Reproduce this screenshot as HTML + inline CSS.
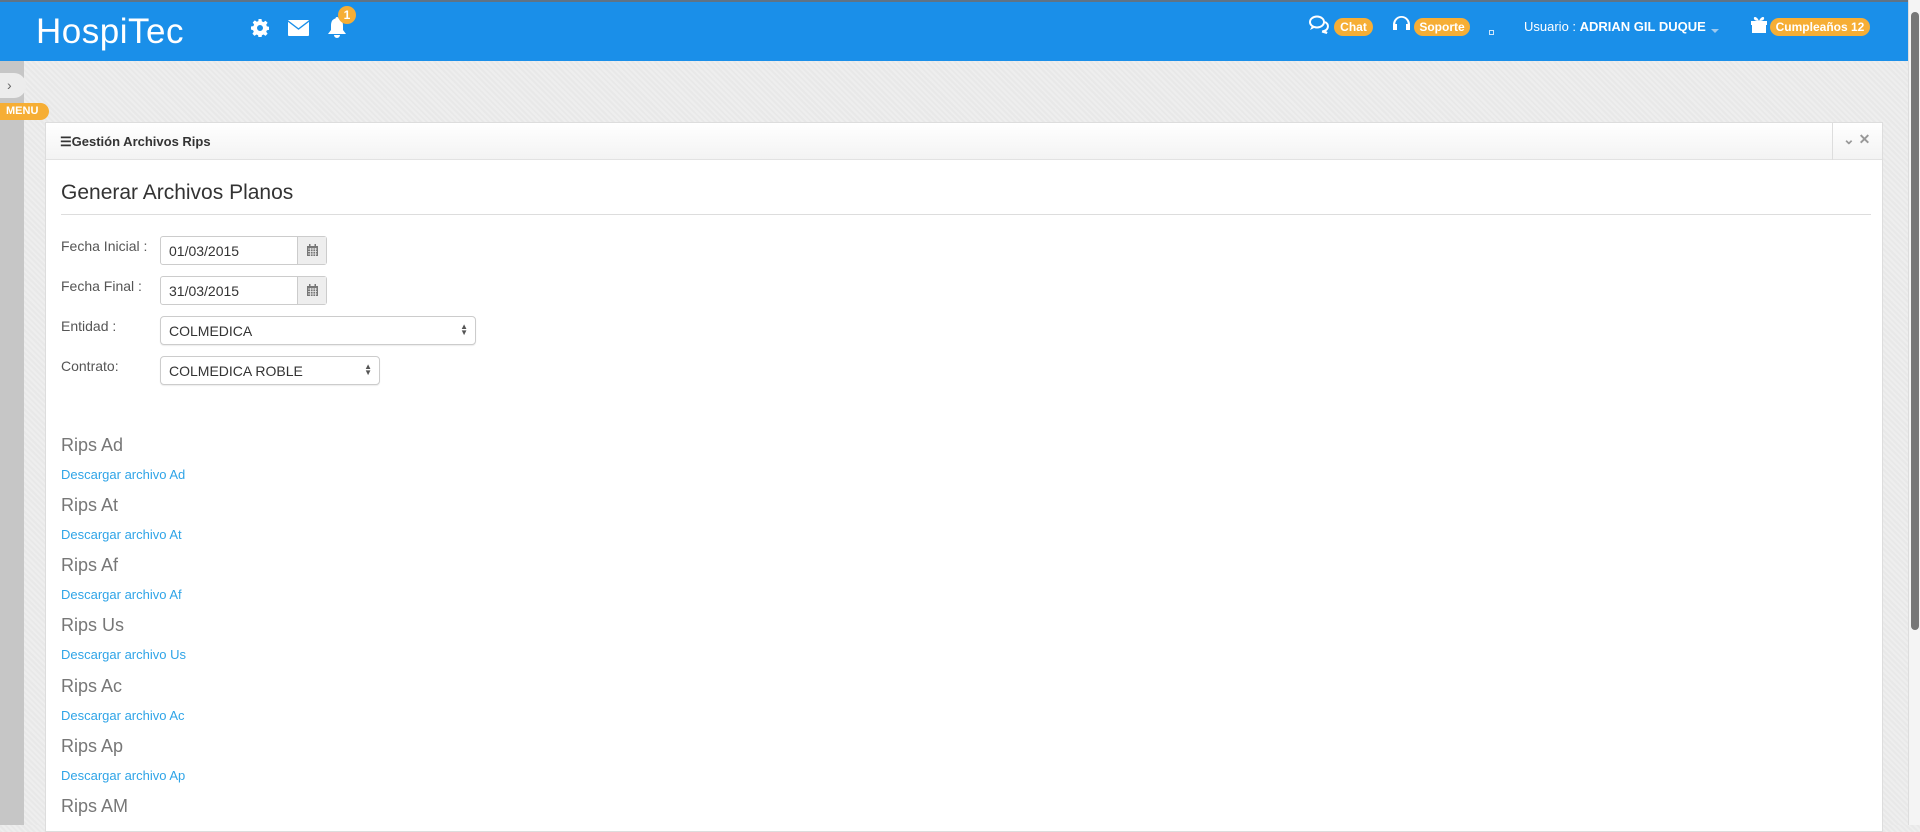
<!DOCTYPE html>
<html><head><meta charset="utf-8"><style>
*{box-sizing:border-box;margin:0;padding:0}
body{width:1920px;height:825px;overflow:hidden;font-family:"Liberation Sans",Arial,sans-serif;background:#ededed;position:relative;
background-image:repeating-linear-gradient(45deg,#eeeeee 0,#eeeeee 2px,#e8e8e8 2px,#e8e8e8 4px)}
.top{position:absolute;left:0;top:0;width:1908px;height:61px;background:#1a8fe9;border-top:2px solid #5f7385}
.logo{position:absolute;left:36px;top:10px;color:#fff;font-size:35px;letter-spacing:0.5px}
.ic{position:absolute;fill:#fff}
.badge{position:absolute;background:#f6ae35;color:#fff;font-weight:bold;font-size:12px;border-radius:9px;height:18px;line-height:18px;text-align:center}
.side{position:absolute;left:0;top:61px;width:24px;height:764px;background:#c6c6c6}
.tab{position:absolute;left:0;top:73px;width:26px;height:25px;background:#ececec;border-radius:0 12px 12px 0;color:#666;font-size:14px;line-height:25px;padding-left:7px}
.menu{position:absolute;left:0;top:103px;width:49px;height:17px;background:#f6ae35;border-radius:0 9px 9px 0;color:#fff;font-weight:bold;font-size:11px;line-height:17px;padding-left:6px}
.panel{position:absolute;left:45px;top:122px;width:1838px;height:710px;background:#fff;border:1px solid #ddd}
.ph{height:37px;background:linear-gradient(#fff,#f3f3f3);border-bottom:1px solid #e2e2e2;position:relative}
.ph .t{position:absolute;left:14px;top:11px;font-size:13px;font-weight:bold;color:#333}
.ctrl{position:absolute;right:0;top:0;width:50px;height:37px;border-left:1px solid #ddd;color:#999;font-size:14px;font-weight:bold;padding:8px 0 0 10px}
h2{position:absolute;left:15px;top:58px;font-size:21px;font-weight:normal;color:#333}
.hr{position:absolute;left:15px;top:91px;width:1810px;border-top:1px solid #ddd}
.lbl{position:absolute;left:15px;font-size:14px;color:#555}
.inp{position:absolute;left:114px;height:29px;border:1px solid #ccc;border-radius:3px;background:#fff;font-size:14px;color:#333;padding:6px 8px}
.add{position:absolute;right:0;top:0;width:29px;height:27px;background:#eee;border-left:1px solid #ccc}
.sel{border-radius:4px;box-shadow:0 1px 1px rgba(0,0,0,.08)}
.arr{position:absolute;right:7px;top:7px;font-size:8px;line-height:6px;color:#555}
.rh{position:absolute;left:15px;font-size:18px;color:#777}
.rl{position:absolute;left:15px;font-size:13px;color:#2fa4e7}
.sb{position:absolute;right:0;top:0;width:12px;height:825px;background:#f4f4f4;border-left:1px solid #ddd}
.sb div{position:absolute;left:2px;top:12px;width:8px;height:618px;background:#777;border-radius:4px}
.ut{position:absolute;left:1524px;top:17px;color:#fff;font-size:13px}
</style></head><body>
<div class="top">
<div class="logo">HospiTec</div>
<svg class="ic" style="left:251px;top:17px" width="18" height="18" viewBox="0 0 18 18"><path d="M7.5 0h3l.4 2.4 1.6.7 2-1.4 2.1 2.1-1.4 2 .7 1.6 2.4.4v3l-2.4.4-.7 1.6 1.4 2-2.1 2.1-2-1.4-1.6.7-.4 2.4h-3l-.4-2.4-1.6-.7-2 1.4-2.1-2.1 1.4-2-.7-1.6L0 10.5v-3l2.4-.4.7-1.6-1.4-2 2.1-2.1 2 1.4 1.6-.7zM9 6a3 3 0 100 6 3 3 0 000-6z"/></svg>
<svg class="ic" style="left:288px;top:18px" width="21" height="16" viewBox="0 0 21 16"><rect width="21" height="16" rx="1"/><path d="M0 1l10.5 8L21 1" stroke="#1a8fe9" stroke-width="1.4" fill="none"/></svg>
<svg class="ic" style="left:327px;top:15px" width="20" height="21" viewBox="0 0 20 21"><path d="M10 0c1 0 1.5.7 1.5 1.5C15 2.3 16 5 16 9v4l3 4H1l3-4V9c0-4 1-6.7 4.5-7.5C8.5.7 9 0 10 0zM7 18h6a3 3 0 01-6 0z"/></svg>
<div class="badge" style="left:338px;top:4px;width:18px">1</div>
<svg class="ic" style="left:1309px;top:13px" width="21" height="19" viewBox="0 0 21 19"><ellipse cx="8" cy="7" rx="7" ry="5.5" fill="none" stroke="#fff" stroke-width="2"/><path d="M3 11l-2 4 5-2.5z"/><path d="M16 7a6 5 0 01-1 9l3 2-5-1.5" fill="none" stroke="#fff" stroke-width="2"/></svg>
<div class="badge" style="left:1334px;top:16px;width:39px">Chat</div>
<svg class="ic" style="left:1392px;top:13px" width="19" height="19" viewBox="0 0 19 19"><path d="M9.5 1A8.5 8.5 0 001 9.5V15h4V9H3.3a6.2 6.2 0 0112.4 0H14v6h4V9.5A8.5 8.5 0 009.5 1z"/></svg>
<div class="badge" style="left:1414px;top:16px;width:56px">Soporte</div>
<div style="position:absolute;left:1489px;top:28px;width:5px;height:5px;border:1px solid #cfe6fb"></div>
<div class="ut">Usuario : <b>ADRIAN GIL DUQUE</b></div>
<div style="position:absolute;left:1711px;top:27px;border:4px solid transparent;border-top:4px solid #9ec9ee"></div>
<svg class="ic" style="left:1750px;top:13px" width="18" height="18" viewBox="0 0 18 18"><path d="M1 6h16v4H1zM2 10h14v8H2zM8 6h2v12H8z"/><path d="M9 6C7 1 3 1 4 4c.5 1.5 3 2 5 2zM9 6c2-5 6-5 5-2-.5 1.5-3 2-5 2z"/></svg>
<div class="badge" style="left:1770px;top:16px;width:100px">Cumpleaños 12</div>
</div>
<div class="side"></div>
<div class="tab">›</div>
<div class="menu">MENU</div>
<div class="panel">
<div class="ph"><div class="t">☰Gestión Archivos Rips</div><div class="ctrl">⌄ ✕</div></div>
<h2>Generar Archivos Planos</h2>
<div class="hr"></div>
<div class="lbl" style="top:115px">Fecha Inicial :</div>
<div class="inp" style="top:113px;width:167px">01/03/2015<div class="add"><svg style="position:absolute;left:9px;top:7px" width="11" height="12" viewBox="0 0 11 12"><rect x="0" y="2" width="11" height="10" fill="#777"/><path d="M1 5h9M1 7.5h9M1 10h9M3.5 4v8M6 4v8M8.5 4v8" stroke="#eee" stroke-width=".8"/><rect x="2" y="0" width="1.5" height="3" fill="#777"/><rect x="7.5" y="0" width="1.5" height="3" fill="#777"/></svg></div></div>
<div class="lbl" style="top:155px">Fecha Final :</div>
<div class="inp" style="top:153px;width:167px">31/03/2015<div class="add"><svg style="position:absolute;left:9px;top:7px" width="11" height="12" viewBox="0 0 11 12"><rect x="0" y="2" width="11" height="10" fill="#777"/><path d="M1 5h9M1 7.5h9M1 10h9M3.5 4v8M6 4v8M8.5 4v8" stroke="#eee" stroke-width=".8"/><rect x="2" y="0" width="1.5" height="3" fill="#777"/><rect x="7.5" y="0" width="1.5" height="3" fill="#777"/></svg></div></div>
<div class="lbl" style="top:195px">Entidad :</div>
<div class="inp sel" style="top:193px;width:316px">COLMEDICA<div class="arr">▲<br>▼</div></div>
<div class="lbl" style="top:235px">Contrato:</div>
<div class="inp sel" style="top:233px;width:220px">COLMEDICA ROBLE<div class="arr">▲<br>▼</div></div>
<div class="rh" style="top:312px">Rips Ad</div><div class="rl" style="top:344px">Descargar archivo Ad</div>
<div class="rh" style="top:372px">Rips At</div><div class="rl" style="top:404px">Descargar archivo At</div>
<div class="rh" style="top:432px">Rips Af</div><div class="rl" style="top:464px">Descargar archivo Af</div>
<div class="rh" style="top:492px">Rips Us</div><div class="rl" style="top:524px">Descargar archivo Us</div>
<div class="rh" style="top:553px">Rips Ac</div><div class="rl" style="top:585px">Descargar archivo Ac</div>
<div class="rh" style="top:613px">Rips Ap</div><div class="rl" style="top:645px">Descargar archivo Ap</div>
<div class="rh" style="top:673px">Rips AM</div>
</div>
<div class="sb"><div></div></div>
</body></html>
